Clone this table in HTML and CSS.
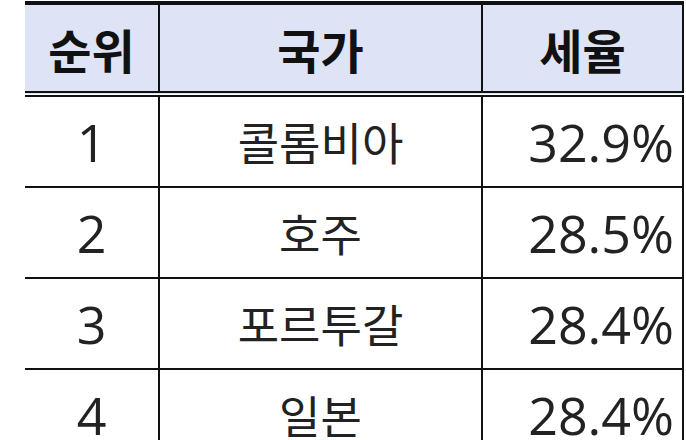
FILE: index.html
```html
<!DOCTYPE html>
<html lang="ko">
<head>
<meta charset="utf-8">
<link rel="stylesheet" href="styles.css">
</head>
<body>
<table class="rank">
  <thead>
    <tr><th class="c1">순위</th><th class="c2">국가</th><th class="c3">세율</th></tr>
  </thead>
  <tbody>
    <tr><td class="num">1</td><td class="name">콜롬비아</td><td class="rate">32.9%</td></tr>
    <tr><td class="num">2</td><td class="name">호주</td><td class="rate">28.5%</td></tr>
    <tr><td class="num">3</td><td class="name">포르투갈</td><td class="rate">28.4%</td></tr>
    <tr><td class="num">4</td><td class="name">일본</td><td class="rate">28.4%</td></tr>
  </tbody>
</table>
</body>
</html>
```
FILE: styles.css
```css
html, body { margin: 0; padding: 0; background: #fff; }
body { padding: 1px 0 0 25px; font-family: "Noto Sans CJK KR", "Noto Sans", sans-serif; color: #1a1a1a; }
.rank { border-collapse: collapse; width: 659px; table-layout: fixed; }
.rank th, .rank td { padding: 0; border: 2px solid #111; }
.rank th:first-child, .rank td:first-child { border-left: none; }
.c1 { width: 133px; }
.c2 { width: 321px; }
.rank thead th {
  background: #dfe3f6; height: 86px; font-size: 47px; font-weight: 700; color: #111;
  border-top: 4px solid #111; border-bottom: 6px double #111; line-height: 1;
}
.rank tbody td { height: 89px; font-size: 45px; font-weight: 400; line-height: 1; color: #222; }
.num, .name { text-align: center; }
.rate { text-align: right; padding-right: 8px !important; }
.num, .rate { font-family: "Open Sans", "Noto Sans", sans-serif; font-size: 52px !important; font-weight: 300; }
```
